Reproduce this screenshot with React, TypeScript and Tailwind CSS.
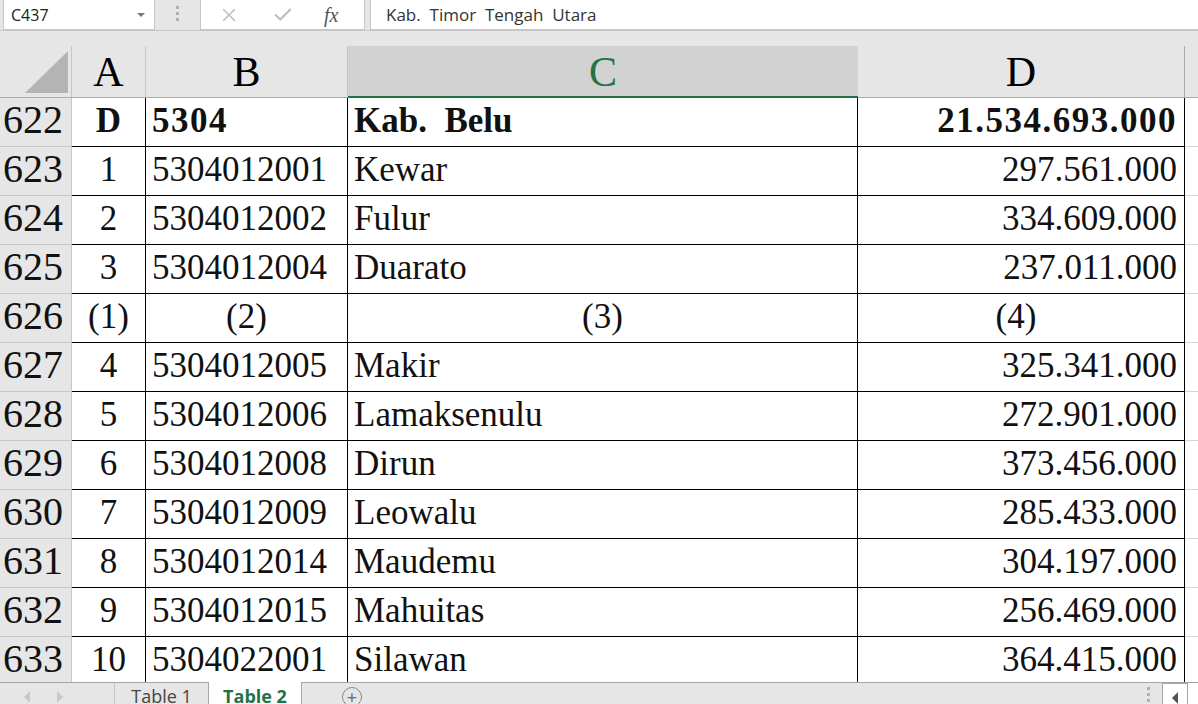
import { X, Check } from "lucide-react";

type Row = { n: number; a: string; b: string; c: string; d: string; bold?: boolean; center?: boolean };

const rows: Row[] = [
  { n: 622, a: "D", b: "5304", c: "Kab.  Belu", d: "21.534.693.000", bold: true },
  { n: 623, a: "1", b: "5304012001", c: "Kewar", d: "297.561.000" },
  { n: 624, a: "2", b: "5304012002", c: "Fulur", d: "334.609.000" },
  { n: 625, a: "3", b: "5304012004", c: "Duarato", d: "237.011.000" },
  { n: 626, a: "(1)", b: "(2)", c: "(3)", d: "(4)", center: true },
  { n: 627, a: "4", b: "5304012005", c: "Makir", d: "325.341.000" },
  { n: 628, a: "5", b: "5304012006", c: "Lamaksenulu", d: "272.901.000" },
  { n: 629, a: "6", b: "5304012008", c: "Dirun", d: "373.456.000" },
  { n: 630, a: "7", b: "5304012009", c: "Leowalu", d: "285.433.000" },
  { n: 631, a: "8", b: "5304012014", c: "Maudemu", d: "304.197.000" },
  { n: 632, a: "9", b: "5304012015", c: "Mahuitas", d: "256.469.000" },
  { n: 633, a: "10", b: "5304022001", c: "Silawan", d: "364.415.000" },
];

const serif = "font-['Liberation_Serif',serif]";
const ui = "font-['Open_Sans','Noto_Sans',sans-serif]";

function FormulaBar() {
  return (
    <div className="flex h-[31px] shrink-0 bg-[#e6e6e6] border-b border-[#c6c6c6]">
      <div className="ml-[3px] w-[152px] h-[30px] bg-white border border-t-0 border-[#c6c6c6] flex items-center justify-between pl-[7px] pr-[9px]">
        <span className={`${ui} text-[16px] text-[#222]`}>C437</span>
        <span className="w-0 h-0 border-l-[4px] border-r-[4px] border-t-[4px] border-l-transparent border-r-transparent border-t-[#777]" />
      </div>
      <div className="w-[45px] flex flex-col items-center justify-center gap-[3px] pb-[4px]">
        <span className="w-[3px] h-[3px] bg-[#b0b0b0]" />
        <span className="w-[3px] h-[3px] bg-[#b0b0b0]" />
        <span className="w-[3px] h-[3px] bg-[#b0b0b0]" />
      </div>
      <div className="w-[165px] h-[30px] bg-white border border-t-0 border-[#c6c6c6] flex items-center pl-[17px]">
        <X size={22} strokeWidth={1.6} className="text-[#bdbdbd]" />
        <Check size={22} strokeWidth={2.2} className="text-[#bdbdbd] ml-[32px]" />
        <span className={`${serif} italic text-[20px] text-[#555] ml-[30px] leading-none`}>fx</span>
      </div>
      <div className="ml-[5px] flex-1 h-[30px] bg-white border border-t-0 border-r-0 border-[#c6c6c6] flex items-center pl-[15px]">
        <span className={`${ui} text-[17px] text-[#333] whitespace-pre`}>Kab.  Timor  Tengah  Utara</span>
      </div>
    </div>
  );
}

function ColumnHeader() {
  const letter = `${serif} text-[42px] leading-[53px] text-center`;
  return (
    <div className="flex h-[52px] shrink-0 bg-[#e6e6e6] border-b border-[#ababab] mt-[15px]">
      <div className="w-[72px] shrink-0 relative border-r border-[#c6c6c6]">
        <svg className="absolute left-0 top-0" width="72" height="51">
          <polygon points="25,47 68,5 68,47" fill="#b4b4b4" />
        </svg>
      </div>
      <div className={`w-[74px] shrink-0 border-r border-[#c6c6c6] ${letter}`}>A</div>
      <div className={`w-[202px] shrink-0 border-r border-[#c6c6c6] ${letter}`}>B</div>
      <div className={`w-[510px] shrink-0 bg-[#d2d2d2] border-b-2 border-[#217346] text-[#217346] ${letter} -mb-[1px]`}>C</div>
      <div className={`w-[327px] shrink-0 border-r border-[#ababab] ${letter}`}>D</div>
      <div className="flex-1" />
    </div>
  );
}

function DataRow({ r }: { r: Row }) {
  const base = `${serif} text-[35px] leading-[45px] h-[49px] border-r border-b border-black whitespace-pre overflow-hidden text-[#111]`;
  const weight = r.bold ? "font-bold tracking-[1.5px]" : "";
  const weightText = r.bold ? "font-bold" : "";
  return (
    <div className="flex h-[49px] shrink-0">
      <div className={`w-[72px] shrink-0 bg-[#e6e6e6] border-r border-b border-[#c8c8c8] ${serif} text-[40px] leading-[43px] pl-[3px] text-[#111]`}>
        {r.n}
      </div>
      <div className={`w-[74px] shrink-0 text-center ${base} ${weightText}`}>{r.a}</div>
      <div className={`w-[202px] shrink-0 ${r.center ? "text-center" : "pl-[6px]"} ${base} ${weight}`}>{r.b}</div>
      <div className={`w-[510px] shrink-0 ${r.center ? "text-center" : "pl-[6px]"} ${base} ${weightText}`}>{r.c}</div>
      <div className={`w-[327px] shrink-0 ${r.center ? "text-center pr-[10px]" : "text-right pr-[7px]"} ${base} ${weight}`}>{r.d}</div>
      <div className="flex-1 border-b border-[#d4d4d4]" />
    </div>
  );
}

function TabBar() {
  return (
    <div className={`flex h-[22px] shrink-0 bg-[#e6e6e6] border-t border-[#a6a6a6] ${ui}`}>
      <div className="w-[115px] shrink-0 flex items-center pl-[24px] gap-[27px] border-r border-[#c6c6c6]">
        <span className="w-0 h-0 border-y-[6px] border-r-[6px] border-y-transparent border-r-[#c8c8c8] mt-[6px]" />
        <span className="w-0 h-0 border-y-[6px] border-l-[6px] border-y-transparent border-l-[#c8c8c8] mt-[6px]" />
      </div>
      <div className="w-[93px] shrink-0 flex justify-center text-[18px] text-[#444] leading-[24px] pt-[1px]">Table 1</div>
      <div className="w-[94px] shrink-0 -mt-[1px] bg-white border-x border-[#a6a6a6] flex justify-center pt-[2px] text-[18px] font-bold text-[#217346] leading-[24px]">Table 2</div>
      <div className="w-[100px] shrink-0 flex justify-center pt-[4px]">
        <span className="w-[20px] h-[20px] rounded-full border border-[#888] flex items-center justify-center text-[#666] text-[18px] leading-none">+</span>
      </div>
      <div className="flex-1" />
      <div className="w-[20px] flex flex-col items-center pt-[4px] gap-[3px]">
        <span className="w-[3px] h-[3px] bg-[#b0b0b0]" />
        <span className="w-[3px] h-[3px] bg-[#b0b0b0]" />
        <span className="w-[3px] h-[3px] bg-[#b0b0b0]" />
      </div>
      <div className="ml-[4px] w-[26px] h-[22px] bg-white border border-[#a6a6a6] flex items-center justify-center">
        <span className="w-0 h-0 border-y-[6px] border-r-[6px] border-y-transparent border-r-[#555] mt-[8px]" />
      </div>
      <div className="w-[10px] bg-white" />
    </div>
  );
}

export default function App() {
  return (
    <div className="w-[1198px] h-[704px] flex flex-col bg-white overflow-hidden">
      <FormulaBar />
      <div className="bg-[#e6e6e6]">
        <ColumnHeader />
      </div>
      <div className="flex-1 flex flex-col overflow-hidden">
        {rows.map((r) => (
          <DataRow key={r.n} r={r} />
        ))}
      </div>
      <TabBar />
    </div>
  );
}
